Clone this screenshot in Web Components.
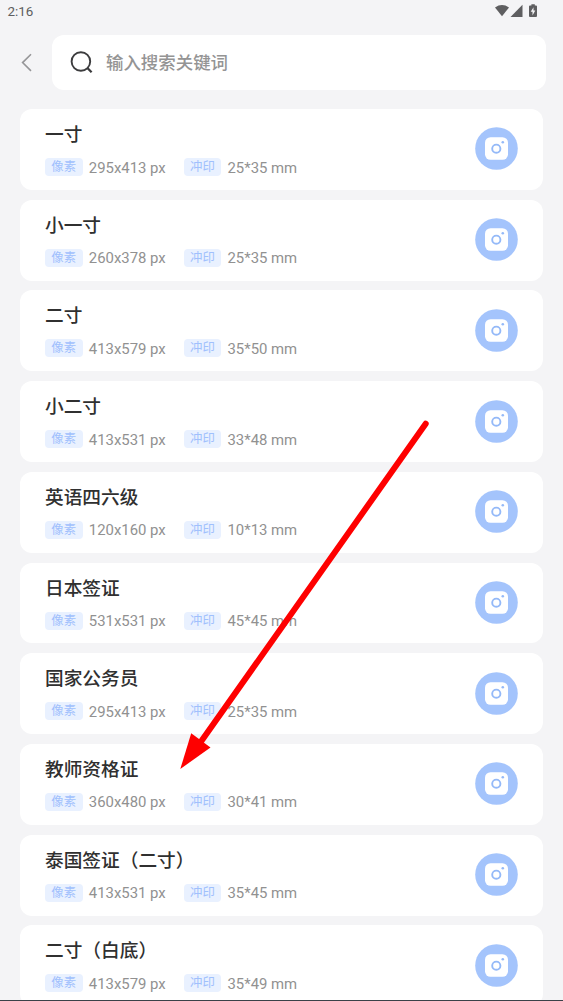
<!DOCTYPE html>
<html lang="zh-CN">
<head>
<meta charset="utf-8">
<title>证件照尺寸</title>
<style>
html,body{margin:0;padding:0;background:#f4f4f6}
body{width:563px;height:1001px;overflow:hidden;font-family:Roboto,"Noto Sans CJK SC",sans-serif}
</style>
</head>
<body>
<size-app></size-app>
<script>
function define(name, html, setup) {
  const tpl = document.createElement('template');
  tpl.innerHTML = html;
  customElements.define(name, class extends HTMLElement {
    constructor() {
      super();
      this.attachShadow({mode: 'open'}).append(tpl.content.cloneNode(true));
    }
    connectedCallback() { if (setup) setup(this, this.shadowRoot); }
  });
}

define('status-bar', `
<style>
:host{display:flex;height:22px;padding:0 24px 0 7.5px;align-items:center;justify-content:space-between;color:#5e5e60;font-size:13.4px;line-height:22px;box-sizing:border-box}
span{padding-top:2px}
svg{display:block}
</style>
<span>2:16</span>
<svg width="46" height="22" viewBox="493 0 46 22" fill="#5e5e60">
<path d="M495 7.4Q502 2.6 509 7.4L502 16.2Z"/>
<path d="M522.5 4.8V17H510.5Z"/>
<path fill-rule="evenodd" d="M531.4 4.3H534.8V5.6H536Q537 5.6 537 6.6V16Q537 17 536 17H530Q529 17 529 16V6.6Q529 5.6 530 5.6H531.4ZM533.5 7.2L530.7 11.8H532.5V15.4L535.3 10.5H533.5Z"/>
</svg>`);

define('search-bar', `
<style>
:host{display:flex;height:55px;margin-top:13px;padding-right:17px}
.back{width:52px;flex:none}
.field{flex:1;display:flex;align-items:center;background:#fff;border-radius:12px;padding-left:17px}
.field svg{margin-right:11px}
.hint{font-size:17.45px;line-height:26px;font-weight:500;color:#949494}
svg{display:block}
</style>
<svg class="back" width="52" height="55" viewBox="0 35 52 55"><path d="M31 54.3L22.6 62.6L31 70.9" fill="none" stroke="#969698" stroke-width="1.6"/></svg>
<div class="field">
<svg width="26" height="26" viewBox="69 50 26 26" fill="none" stroke="#3c3c3e" stroke-width="1.9"><circle cx="80.9" cy="61.5" r="9.3"/><path d="M87.4 68L91.6 72.2" stroke-width="2.3"/></svg>
<span class="hint"><slot></slot></span>
</div>`);

define('spec-tag', `
<style>
:host{display:flex;align-items:center;justify-content:center;width:37.5px;height:18px;flex:none;border-radius:4px;background:#e9f1ff;color:#a0c0fd;font-size:12.4px;line-height:18px}
</style><slot></slot>`);

define('camera-button', `
<style>
:host{display:block;width:43px;height:43px;flex:none}
svg{display:block}
</style>
<svg width="43" height="43" viewBox="0 0 43 43">
<circle cx="21.5" cy="21.5" r="21.3" fill="#a4c4fc"/>
<rect x="10" y="10.2" width="23" height="22.6" rx="5.5" fill="#fff"/>
<circle cx="21.3" cy="21.7" r="4.1" fill="none" stroke="#94b9f8" stroke-width="1.9"/>
<circle cx="27.8" cy="15.3" r="1.3" fill="#94b9f8"/>
</svg>`);

define('size-card', `
<style>
:host{display:flex;box-sizing:border-box;height:80.9px;flex:none;align-items:center;justify-content:space-between;background:#fff;border-radius:12px;padding:0 25px}
.info{align-self:flex-start;padding-top:12px}
h2{margin:0;font-size:18.7px;line-height:28px;font-weight:500;color:#303030;white-space:nowrap}
.specs{display:flex;align-items:center;height:18px;margin-top:9px;font-size:14.9px;line-height:18px;color:#919191;white-space:nowrap}
.value{padding:1px 0 0 6.3px}
.pixels{width:101.2px;box-sizing:border-box}
camera-button{margin-top:-1px}
</style>
<div class="info">
<h2><slot></slot></h2>
<div class="specs"><spec-tag>像素</spec-tag><span class="value pixels"></span><spec-tag>冲印</spec-tag><span class="value print"></span></div>
</div>
<camera-button></camera-button>`, (el, root) => {
  root.querySelector('.pixels').textContent = el.getAttribute('pixels') + ' px';
  root.querySelector('.print').textContent = el.getAttribute('print') + ' mm';
});

define('pointer-arrow', `
<style>
:host{position:absolute;inset:0;pointer-events:none}
svg{display:block}
</style>
<svg width="563" height="1001" viewBox="0 0 563 1001">
<path d="M425.7 423.7L200 743" stroke="#fe0000" stroke-width="6" stroke-linecap="round"/>
<path d="M180.3 769L191.2 733.3L210.5 747.5Z" fill="#fe0000"/>
</svg>`);

define('size-app', `
<style>
:host{display:block;position:relative;width:563px;height:1001px;overflow:hidden;background:#f4f4f6;box-sizing:border-box;border-bottom:1px solid #3a4148}
.list{display:flex;flex-direction:column;gap:9.82px;padding:19px 20px 0}
</style>
<status-bar></status-bar>
<search-bar>输入搜索关键词</search-bar>
<div class="list">
<size-card pixels="295x413" print="25*35">一寸</size-card>
<size-card pixels="260x378" print="25*35">小一寸</size-card>
<size-card pixels="413x579" print="35*50">二寸</size-card>
<size-card pixels="413x531" print="33*48">小二寸</size-card>
<size-card pixels="120x160" print="10*13">英语四六级</size-card>
<size-card pixels="531x531" print="45*45">日本签证</size-card>
<size-card pixels="295x413" print="25*35">国家公务员</size-card>
<size-card pixels="360x480" print="30*41">教师资格证</size-card>
<size-card pixels="413x531" print="35*45">泰国签证（二寸）</size-card>
<size-card pixels="413x579" print="35*49">二寸（白底）</size-card>
</div>
<pointer-arrow></pointer-arrow>`);
</script>
</body>
</html>
